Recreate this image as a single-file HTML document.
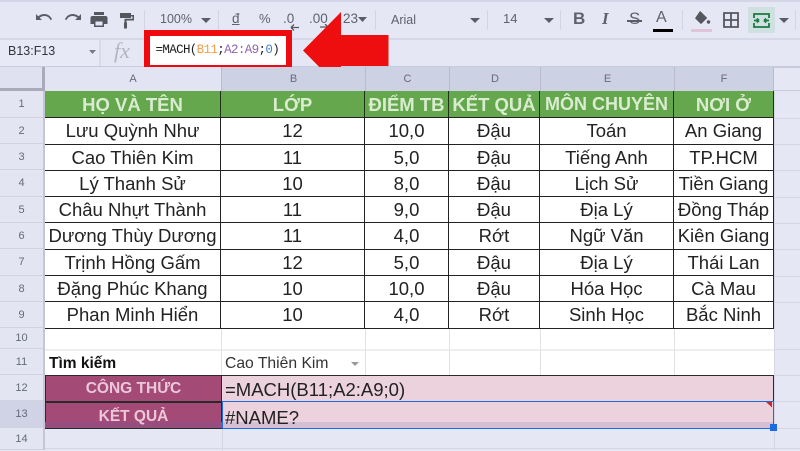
<!DOCTYPE html>
<html><head><meta charset="utf-8"><style>
html,body{margin:0;padding:0}
body{width:800px;height:450px;overflow:hidden;position:relative;background:#e6e7f5;font-family:"Liberation Sans",sans-serif;color:#1c1c1e}
div,span,svg{position:absolute;box-sizing:border-box}
.tx{white-space:nowrap;color:#5f616d;font-size:12.5px;line-height:16px}
.sep{width:1px;background:#d3d5e4;top:10px;height:20px}
.ch{top:67px;height:24px;background:#cdd1e4;border-right:1px solid #b9bccd;color:#666a78;font-size:11px;line-height:25px;text-align:center}
.rh{left:0;width:43px;color:#666a78;font-size:11px;text-align:center;border-bottom:1px solid #d0d2e2;background:#e3e5f3}
.r{left:45px;width:729px;border-bottom:1.5px solid #222;background:#fff}
.c{top:0;height:100%;border-right:1.5px solid #222;text-align:center;font-size:18.5px;white-space:nowrap;color:#222}
.a{left:0;width:176px}.b{left:176px;width:144px}.d3{left:320px;width:84px}.d{left:404px;width:91px}.e{left:495px;width:134px}.f{left:629px;width:100px}
.h .c{background:#65a74c;color:#d9ecd0;font-weight:bold;font-size:18.5px;border-right-color:#1e3315}
.h .e{font-size:18px}
</style></head><body>
<div style="left:0;top:0;width:800px;height:2px;background:#d4d5e6"></div>
<div style="left:0;top:38px;width:800px;height:2px;background:#d6d8e8"></div>
<div style="left:0;top:66px;width:800px;height:2px;background:#c9cbdc"></div>

<svg style="left:34px;top:11px" width="20" height="16" viewBox="0 0 20 16"><path d="M2 3v6h6L5.6 6.8C7 5.6 8.6 5 10.4 5c2.8 0 5 1.600 6 4l1.700-.6C16.800 5.200 13.800 3 10.400 3 8 3 5.800 3.900 4.200 5.300z" fill="#5a5c68"/></svg>
<svg style="left:63px;top:11px" width="20" height="16" viewBox="0 0 20 16"><path d="M18 3v6h-6l2.400-2.200C13 5.600 11.400 5 9.600 5c-2.800 0-5 1.600-6 4l-1.700-.6C3.200 5.200 6.200 3 9.600 3c2.400 0 4.600.9 6.200 2.300z" fill="#5a5c68"/></svg>
<svg style="left:90px;top:11px" width="18" height="17" viewBox="0 0 18 17"><path d="M4 1h10v3H4zM2.500 5h13A2 2 0 0 1 17.500 7v6H14v3H4v-3H.5V7a2 2 0 0 1 2-2z" fill="#55575f"/><rect x="5.500" y="10.500" width="7" height="4" fill="#e6e7f5"/></svg>
<svg style="left:119px;top:12px" width="16" height="17" viewBox="0 0 16 17"><path d="M1 1h11v5H1zM12 3h3v5.500H7.500V11h-2V6.800h8V4.500H12zM5 10.500h3V16.500H5z" fill="#55575f"/></svg>
<div class="sep" style="left:144px"></div>
<div class="tx" style="left:160px;top:11px">100%</div>
<svg style="left:201px;top:18px" width="11" height="6"><path d="M0 0h10L5 5z" fill="#5a5c68"/></svg>
<div class="sep" style="left:218px"></div>
<div class="tx" style="left:232px;top:11px;font-size:13.500px;text-decoration:underline">đ</div>
<div class="tx" style="left:259px;top:11px;font-size:13px">%</div>
<div class="tx" style="left:283px;top:11px;font-size:13.500px">.0</div>
<svg style="left:290px;top:24px" width="10" height="7"><path d="M1 3.500h8M1 3.500l3-3M1 3.500l3 3" stroke="#55575f" stroke-width="1.300" fill="none"/></svg>
<div class="tx" style="left:309px;top:11px;font-size:13.500px">.00</div>
<svg style="left:319px;top:24px" width="10" height="6"><path d="M1 3h8M9 3L6 0M9 3L6 6" stroke="#55575f" stroke-width="1.300" fill="none"/></svg>
<div class="tx" style="left:343px;top:11px;font-size:13.500px">23</div>
<svg style="left:358px;top:17px" width="10" height="6"><path d="M0 0h9L4.500 5z" fill="#5a5c68"/></svg>
<div class="sep" style="left:375px"></div>
<div class="tx" style="left:391px;top:12px;font-size:12.500px">Arial</div>
<svg style="left:470px;top:18px" width="11" height="6"><path d="M0 0h10L5 5z" fill="#5a5c68"/></svg>
<div class="sep" style="left:487px"></div>
<div class="tx" style="left:503px;top:11px;font-size:13px">14</div>
<svg style="left:544px;top:18px" width="11" height="6"><path d="M0 0h10L5 5z" fill="#5a5c68"/></svg>
<div class="sep" style="left:560px"></div>
<div class="tx" style="left:573px;top:9px;font-size:17px;line-height:20px;font-weight:bold">B</div>
<div class="tx" style="left:602px;top:9px;font-size:17px;line-height:20px;font-style:italic;font-weight:bold;font-family:'Liberation Serif',serif">I</div>
<div class="tx" style="left:629px;top:9px;font-size:17px;line-height:20px">S</div>
<div style="left:627px;top:20px;width:15px;height:1.500px;background:#5a5c68"></div>
<div class="tx" style="left:656px;top:8px;font-size:16px;line-height:19px">A</div>
<div style="left:653px;top:29px;width:20px;height:3px;background:#000"></div>
<div class="sep" style="left:682px"></div>
<svg style="left:693px;top:11px" width="18" height="15" viewBox="0 0 18 15"><path d="M7 0l1.200 1 6 6-5.500 5.500a1 1 0 0 1-1.400 0L2 7.200z" fill="#55575f"/><circle cx="15.500" cy="11" r="1.700" fill="#55575f"/></svg>
<div style="left:691px;top:29px;width:21px;height:3px;background:#e0c4d8"></div>
<svg style="left:723px;top:12px" width="16" height="16" viewBox="0 0 16 16"><path d="M1 1h14v14H1zM8 1v14M1 8h14" fill="none" stroke="#55575f" stroke-width="1.800"/></svg>
<div style="left:748px;top:7px;width:27px;height:26px;background:#cfe0e0"></div>
<svg style="left:753px;top:13px" width="17" height="15" viewBox="0 0 17 15"><path d="M1 5V1h15v4M1 10v4h15v-4M1 7.500h5M16 7.500h-5M6 7.500L3.800 5.500M6 7.500L3.800 9.500M11 7.500l2.200-2M11 7.500l2.200 2" fill="none" stroke="#1b7a43" stroke-width="1.800"/></svg>
<svg style="left:779px;top:18px" width="11" height="6"><path d="M0 0h10L5 5z" fill="#5a5c68"/></svg>
<div class="sep" style="left:795px"></div>

<div style="left:0;top:40px;width:101px;height:26px;background:#e8e9f6;border-right:2px solid #d8dae9"></div>
<div class="tx" style="left:8px;top:43px;font-size:12.500px;line-height:16px;color:#33343c">B13:F13</div>
<svg style="left:89px;top:50px" width="8" height="5"><path d="M0 0h7L3.500 4z" fill="#777a85"/></svg>
<div class="tx" style="left:114px;top:39px;font-size:22px;line-height:24px;font-style:italic;font-family:'Liberation Serif',serif;color:#b3b5c2">fx</div>

<div style="left:144px;top:30px;width:148px;height:41px;background:#fff;border:6px solid #ee0a0e"></div>
<div style="left:155.500px;top:42px;font-family:'Liberation Mono',monospace;font-size:12.500px;line-height:17px;white-space:nowrap;letter-spacing:-.64px;color:#1d1d1d">=MACH(<span style="position:static;color:#f0a050">B11</span>;<span style="position:static;color:#8e63ad">A2:A9</span>;<span style="position:static;color:#3f7fd0">0</span>)</div>
<svg style="left:300px;top:12px" width="90" height="78" viewBox="0 0 90 78"><path d="M3 38.500L41 0V23H88.500V54H41V77z" fill="#ee0d0f"/></svg>

<div style="left:0;top:67px;width:45px;height:24px;background:#dfe1f0;border-right:3px solid #a9abbb;border-bottom:3px solid #a9abbb"></div>
<div class="ch" style="left:45px;width:177px;background:#e2e4f3">A</div>
<div class="ch" style="left:222px;width:144px">B</div>
<div class="ch" style="left:366px;width:84px">C</div>
<div class="ch" style="left:450px;width:91px">D</div>
<div class="ch" style="left:541px;width:134px">E</div>
<div class="ch" style="left:675px;width:99px">F</div>
<div style="left:774px;top:67px;width:26px;height:24px;border-bottom:1px solid #c9cbdc"></div>

<div class="rh" style="top:91px;height:27px;line-height:27px">1</div>
<div class="rh" style="top:118px;height:26px;line-height:26px">2</div>
<div class="rh" style="top:144px;height:26px;line-height:26px">3</div>
<div class="rh" style="top:170px;height:27px;line-height:27px">4</div>
<div class="rh" style="top:197px;height:26px;line-height:26px">5</div>
<div class="rh" style="top:223px;height:26px;line-height:26px">6</div>
<div class="rh" style="top:249px;height:27px;line-height:27px">7</div>
<div class="rh" style="top:276px;height:26px;line-height:26px">8</div>
<div class="rh" style="top:302px;height:26px;line-height:26px">9</div>
<div class="rh" style="top:328px;height:21px;line-height:21px">10</div>
<div class="rh" style="top:349px;height:26px;line-height:26px">11</div>
<div class="rh" style="top:375px;height:26px;line-height:26px">12</div>
<div class="rh" style="top:401px;height:27px;line-height:27px;background:#cfd3e5">13</div>
<div class="rh" style="top:428px;height:22px;line-height:22px">14</div>
<div style="left:43px;top:91px;width:2px;height:359px;background:#c4c6d6"></div>

<div class="r h" style="top:91px;height:27px;line-height:27px"><div class="c a">HỌ VÀ TÊN</div><div class="c b">LỚP</div><div class="c d3">ĐIỂM TB</div><div class="c d">KẾT QUẢ</div><div class="c e">MÔN CHUYÊN</div><div class="c f">NƠI Ở</div></div>
<div class="r" style="top:118px;height:26.500px;line-height:26px"><div class="c a">Lưu Quỳnh Như</div><div class="c b">12</div><div class="c d3">10,0</div><div class="c d">Đậu</div><div class="c e">Toán</div><div class="c f">An Giang</div></div>
<div class="r" style="top:144.500px;height:26px;line-height:26px"><div class="c a">Cao Thiên Kim</div><div class="c b">11</div><div class="c d3">5,0</div><div class="c d">Đậu</div><div class="c e">Tiếng Anh</div><div class="c f">TP.HCM</div></div>
<div class="r" style="top:170.500px;height:26.500px;line-height:26px"><div class="c a">Lý Thanh Sử</div><div class="c b">10</div><div class="c d3">8,0</div><div class="c d">Đậu</div><div class="c e">Lịch Sử</div><div class="c f">Tiền Giang</div></div>
<div class="r" style="top:197px;height:26px;line-height:26px"><div class="c a">Châu Nhựt Thành</div><div class="c b">11</div><div class="c d3">9,0</div><div class="c d">Đậu</div><div class="c e">Địa Lý</div><div class="c f">Đồng Tháp</div></div>
<div class="r" style="top:223px;height:26.500px;line-height:26px"><div class="c a">Dương Thùy Dương</div><div class="c b">11</div><div class="c d3">4,0</div><div class="c d">Rớt</div><div class="c e">Ngữ Văn</div><div class="c f">Kiên Giang</div></div>
<div class="r" style="top:249.500px;height:26.500px;line-height:26px"><div class="c a">Trịnh Hồng Gấm</div><div class="c b">12</div><div class="c d3">5,0</div><div class="c d">Đậu</div><div class="c e">Địa Lý</div><div class="c f">Thái Lan</div></div>
<div class="r" style="top:276px;height:26px;line-height:26px"><div class="c a">Đặng Phúc Khang</div><div class="c b">10</div><div class="c d3">10,0</div><div class="c d">Đậu</div><div class="c e">Hóa Học</div><div class="c f">Cà Mau</div></div>
<div class="r" style="top:302px;height:26.500px;line-height:26px"><div class="c a">Phan Minh Hiển</div><div class="c b">10</div><div class="c d3">4,0</div><div class="c d">Rớt</div><div class="c e">Sinh Học</div><div class="c f">Bắc Ninh</div></div>

<div style="left:45px;top:328.500px;width:729px;height:47px;background:#fff"></div>
<div style="left:45px;top:349px;width:729px;height:1.500px;background:#eeeeee"></div>
<div style="left:221px;top:329px;width:1px;height:46px;background:#e2e2e2"></div>
<div style="left:365px;top:329px;width:1px;height:46px;background:#e2e2e2"></div>
<div style="left:449px;top:329px;width:1px;height:46px;background:#e2e2e2"></div>
<div style="left:540px;top:329px;width:1px;height:46px;background:#e2e2e2"></div>
<div style="left:674px;top:329px;width:1px;height:46px;background:#e2e2e2"></div>
<div style="left:49px;top:354px;font-size:15.500px;line-height:20px;font-weight:bold;color:#111;white-space:nowrap">Tìm kiếm</div>
<div style="left:225px;top:354px;font-size:15.700px;line-height:20px;color:#333;white-space:nowrap">Cao Thiên Kim</div>
<svg style="left:351px;top:362px" width="9" height="5"><path d="M0 0h8L4 4z" fill="#999"/></svg>

<div style="left:45px;top:375px;width:177px;height:54px;background:#a34a76;border:1px solid #2a2a2a"></div>
<div style="left:45px;top:401px;width:177px;height:1.500px;background:#2a2a2a"></div>
<div style="left:45px;top:422px;width:177px;height:6px;background:#964e80"></div>
<div style="left:45px;top:376px;width:177px;height:25px;line-height:26px;text-align:center;font-size:15.500px;font-weight:bold;color:#ecc7d9">CÔNG THỨC</div>
<div style="left:45px;top:405px;width:177px;height:25px;line-height:24px;text-align:center;font-size:15.500px;font-weight:bold;color:#ecc7d9">KẾT QUẢ</div>

<div style="left:222px;top:375px;width:552px;height:27px;background:#ebd2dc;border:1px solid #2a2a2a;border-left:0"></div>
<div style="left:225px;top:379px;font-size:18.500px;line-height:21px;color:#222;white-space:nowrap">=MACH(B11;A2:A9;0)</div>
<div style="left:222px;top:402px;width:552px;height:26px;background:#ebd2dc"></div>
<div style="left:222px;top:422px;width:552px;height:6px;background:#d5bfd4"></div>
<div style="left:225px;top:406.500px;font-size:18.500px;line-height:21px;color:#222;white-space:nowrap">#NAME?</div>
<div style="left:774px;top:91px;width:1px;height:359px;background:#d4d6e6"></div>
<div style="left:774px;top:118px;width:26px;height:1px;background:#d4d6e6"></div>
<div style="left:774px;top:144px;width:26px;height:1px;background:#d4d6e6"></div>
<div style="left:774px;top:170px;width:26px;height:1px;background:#d4d6e6"></div>
<div style="left:774px;top:197px;width:26px;height:1px;background:#d4d6e6"></div>
<div style="left:774px;top:223px;width:26px;height:1px;background:#d4d6e6"></div>
<div style="left:774px;top:249px;width:26px;height:1px;background:#d4d6e6"></div>
<div style="left:774px;top:276px;width:26px;height:1px;background:#d4d6e6"></div>
<div style="left:774px;top:302px;width:26px;height:1px;background:#d4d6e6"></div>
<div style="left:774px;top:349px;width:26px;height:1px;background:#d4d6e6"></div>
<div style="left:774px;top:375px;width:26px;height:1px;background:#d4d6e6"></div>
<div style="left:774px;top:401px;width:26px;height:1px;background:#d4d6e6"></div>
<div style="left:774px;top:428px;width:26px;height:1px;background:#d4d6e6"></div>
<div style="left:222px;top:428.500px;width:0;height:22px;border-left:1px solid #d4d6e6"></div>
<div style="left:45px;top:448px;width:755px;height:1px;background:#d4d6e6"></div>
<div style="left:221.500px;top:400.500px;width:552px;height:28px;border:1.500px solid #1a6ce0"></div>
<svg style="left:766px;top:402px" width="7" height="6"><path d="M0 0h6v5.500z" fill="#c62d2d"/></svg>
<div style="left:770px;top:424px;width:7px;height:7px;background:#1a6ce0"></div>
</body></html>
